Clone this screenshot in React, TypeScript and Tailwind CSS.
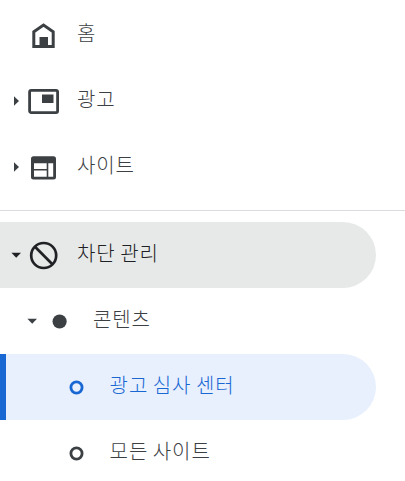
import type { ReactNode } from 'react';

function ArrowRight() {
  return (
    <svg className="block h-4 w-4 shrink-0" viewBox="0 0 16 16" fill="#3c4043">
      <path d="M6 3.2 11 8 6 12.8Z" />
    </svg>
  );
}

function ArrowDown({ color = '#3c4043' }: { color?: string }) {
  return (
    <svg className="block h-4 w-4 shrink-0" viewBox="0 0 16 16" fill={color}>
      <path d="M3.4 5.8H13L8.2 10.8Z" />
    </svg>
  );
}

function Icon({ children }: { children: ReactNode }) {
  return (
    <svg className="block h-8 w-8 shrink-0" viewBox="0 0 32 32" fill="none">
      {children}
    </svg>
  );
}

function HomeIcon() {
  return (
    <Icon>
      <path d="M5.8 27.5V12.8L15.5 6 25.2 12.8V27.5Z" stroke="#3c4043" strokeWidth="3" />
      <path d="M11.5 18H20V28H11.5Z" fill="#3c4043" />
    </Icon>
  );
}

function AdsIcon() {
  return (
    <Icon>
      <rect x="1.6" y="5.4" width="28" height="22.2" rx="1.6" stroke="#3c4043" strokeWidth="2.8" />
      <path d="M14 9.5H25.5V18H14Z" fill="#3c4043" />
    </Icon>
  );
}

function SitesIcon() {
  return (
    <Icon>
      <path
        fill="#3c4043"
        fillRule="evenodd"
        d="M5.5 5.3H25.5A2.5 2.5 0 0 1 28 7.8V26A2.5 2.5 0 0 1 25.5 28.5H5.5A2.5 2.5 0 0 1 3 26V7.8A2.5 2.5 0 0 1 5.5 5.3ZM6 12.3V17.9H18.7V12.3ZM6 19.4V25.8H18.7V19.4ZM20.3 12.3V25.8H25.2V12.3Z"
      />
    </Icon>
  );
}

function BlockIcon() {
  return (
    <Icon>
      <circle cx="15.7" cy="16.5" r="12.5" stroke="#202124" strokeWidth="2.7" />
      <path d="M7 7.8 24.4 25.2" stroke="#202124" strokeWidth="2.7" />
    </Icon>
  );
}

function Ring({ color }: { color: string }) {
  return (
    <Icon>
      <circle cx="16.5" cy="16.5" r="5.6" stroke={color} strokeWidth="2.8" />
    </Icon>
  );
}

function Label({ children }: { children: string }) {
  return <span className="pb-1 whitespace-nowrap">{children}</span>;
}

export default function App() {
  return (
    <nav className="h-[481px] w-[405px] overflow-hidden bg-white pt-0.5 font-['Noto_Sans_CJK_KR',sans-serif] text-[20px] leading-[30px] font-light tracking-[0.9px] [word-spacing:-0.7px] text-[#3c4043]">
      <div className="flex h-[66px] items-center pl-7">
        <HomeIcon />
        <span className="w-[17px]" />
        <Label>홈</Label>
      </div>
      <div className="flex h-[66px] items-center pl-2">
        <ArrowRight />
        <span className="w-1" />
        <AdsIcon />
        <span className="w-[17px]" />
        <Label>광고</Label>
      </div>
      <div className="flex h-[66px] items-center pl-2">
        <ArrowRight />
        <span className="w-1" />
        <SitesIcon />
        <span className="w-[17px]" />
        <Label>사이트</Label>
      </div>
      <div className="mt-2.5 mb-[11px] h-px bg-[#dadce0]" />
      <div className="flex h-[66px] w-[376px] items-center rounded-r-full bg-[#e7e9e8] pl-2 text-[#202124]">
        <ArrowDown color="#202124" />
        <span className="w-1" />
        <BlockIcon />
        <span className="w-[17px]" />
        <Label>차단 관리</Label>
      </div>
      <div className="flex h-[66px] items-center pl-6">
        <ArrowDown />
        <span className="w-1" />
        <Icon>
          <circle cx="15.6" cy="16.5" r="7.1" fill="#3c4043" />
        </Icon>
        <span className="w-[17px]" />
        <Label>콘텐츠</Label>
      </div>
      <div className="flex h-[66px] w-[376px] items-center rounded-r-full border-l-[6px] border-[#1967d2] bg-[#e8f0fe] pl-[54px] text-[#1967d2]">
        <Ring color="#1967d2" />
        <span className="w-[17.6px]" />
        <Label>광고 심사 센터</Label>
      </div>
      <div className="flex h-[66px] items-center pl-[60px]">
        <Ring color="#3c4043" />
        <span className="w-[17.6px]" />
        <Label>모든 사이트</Label>
      </div>
    </nav>
  );
}
